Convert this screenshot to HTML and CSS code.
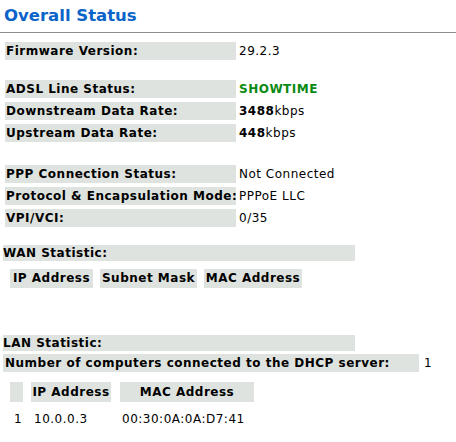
FILE: index.html
```html
<!DOCTYPE html>
<html>
<head>
<meta charset="utf-8">
<link rel="stylesheet" href="styles.css">
</head>
<body>
<h1 class="title">Overall Status</h1>
<div class="rule"></div>

<div class="group g1">
  <div class="row"><div class="label">Firmware Version:</div><div class="value">29.2.3</div></div>
</div>

<div class="group g2">
  <div class="row"><div class="label">ADSL Line Status:</div><div class="value ok">SHOWTIME</div></div>
  <div class="row"><div class="label">Downstream Data Rate:</div><div class="value"><b>3488</b>kbps</div></div>
  <div class="row"><div class="label">Upstream Data Rate:</div><div class="value"><b>448</b>kbps</div></div>
</div>

<div class="group g3">
  <div class="row"><div class="label">PPP Connection Status:</div><div class="value">Not Connected</div></div>
  <div class="row"><div class="label">Protocol &amp; Encapsulation Mode:</div><div class="value">PPPoE LLC</div></div>
  <div class="row"><div class="label">VPI/VCI:</div><div class="value">0/35</div></div>
</div>

<div class="section wan">
  <div class="bar">WAN Statistic:</div>
  <div class="heads wan-heads">
    <div class="th w-ip">IP Address</div>
    <div class="th w-mask">Subnet Mask</div>
    <div class="th w-mac">MAC Address</div>
  </div>
</div>

<div class="section lan">
  <div class="bar">LAN Statistic:</div>
  <div class="dhcp"><div class="label wide">Number of computers connected to the DHCP server:</div><div class="value">1</div></div>
  <div class="heads lan-heads">
    <div class="th blank"></div>
    <div class="th ip">IP Address</div>
    <div class="th mac">MAC Address</div>
  </div>
  <div class="lan-row">
    <div class="td n">1</div>
    <div class="td ip">10.0.0.3</div>
    <div class="td mac">00:30:0A:0A:D7:41</div>
  </div>
</div>
</body>
</html>
```

FILE: styles.css
```css
html, body {
  margin: 0;
  padding: 0;
  background: #ffffff;
}
body {
  font-family: "DejaVu Sans", Verdana, sans-serif;
  font-size: 12px;
  letter-spacing: 0.5px;
  color: #000000;
  width: 456px;
  height: 442px;
  overflow: hidden;
}
.title {
  margin: 0;
  padding: 5px 0 0 4px;
  height: 22px;
  font-size: 16.5px;
  letter-spacing: 0;
  line-height: 22px;
  font-weight: bold;
  color: #0b64c9;
}
.rule {
  margin-top: 5px;
  height: 1px;
  background: #8c8c8c;
}
.group {
  display: flex;
  flex-direction: column;
  gap: 4px;
  padding-left: 5px;
}
.g1 { margin-top: 9px; }
.g2 { margin-top: 20px; }
.g3 { margin-top: 23px; }
.row {
  display: flex;
  align-items: center;
  height: 18px;
}
.label {
  width: 231px;
  height: 18px;
  line-height: 18px;
  background: #dfe3df;
  font-weight: bold;
  padding-left: 1px;
  box-sizing: border-box;
  white-space: nowrap;
  overflow: hidden;
}
.value {
  padding-left: 3px;
  line-height: 18px;
  white-space: nowrap;
}
.value.ok {
  color: #0b8a12;
  font-weight: bold;
}
.section {
  padding-left: 3px;
}
.wan { margin-top: 18px; }
.lan { margin-top: 47px; }
.bar {
  width: 352px;
  height: 16px;
  line-height: 17px;
  background: #dfe3df;
  font-weight: bold;
  padding-left: 0;
  box-sizing: border-box;
}
.heads {
  display: flex;
}
.th {
  background: #dfe3df;
  font-weight: bold;
  height: 19px;
  line-height: 19px;
  box-sizing: border-box;
  white-space: nowrap;
  text-align: center;
}
.wan-heads {
  margin-top: 8px;
  padding-left: 7px;
  gap: 7px;
}
.w-ip { width: 83px; }
.w-mask { width: 97px; }
.w-mac { width: 98px; }
.dhcp {
  display: flex;
  margin-top: 3px;
  height: 18px;
}
.label.wide {
  width: 416px;
  padding-left: 2px;
}
.dhcp .value { padding-left: 5px; }
.lan-heads {
  margin-top: 10px;
  padding-left: 7px;
  gap: 8px;
}
.lan-heads .th { height: 20px; line-height: 20px; }
.lan-heads .blank { width: 13px; }
.lan-heads .ip { width: 80px; }
.lan-heads .mac { width: 134px; margin-left: 1px; }
.lan-row {
  display: flex;
  margin-top: 9px;
  line-height: 16px;
}
.td { white-space: nowrap; }
.lan-row .n { width: 20px; padding-left: 11px; box-sizing: border-box; }
.lan-row .ip { width: 88px; padding-left: 11px; box-sizing: border-box; }
.lan-row .mac { padding-left: 11px; }
```
